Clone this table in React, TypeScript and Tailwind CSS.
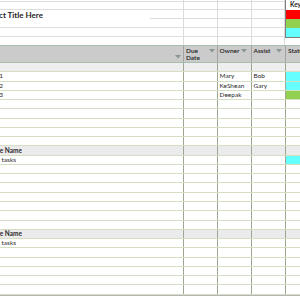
import React from "react";

const font = { fontFamily: "Lato, 'Open Sans', sans-serif" };

function Arrow() {
  return (
    <svg width="6" height="4" viewBox="0 0 6 4" className="shrink-0">
      <path d="M0 0 L6 0 L3 3.5 Z" fill="#8a9696" />
    </svg>
  );
}

function Clip({ w, text, bold }: { w: string; text: string; bold?: boolean }) {
  return (
    <div className={`${w} overflow-hidden flex justify-end shrink-0`}>
      <span className={`whitespace-nowrap ${bold ? "font-bold" : ""}`}>{text}</span>
    </div>
  );
}

type Row = {
  kind: "band" | "task" | "section" | "empty";
  a?: string;
  aw?: string;
  owner?: string;
  assist?: string;
  status?: string;
};

const rows: Row[] = [
  { kind: "band" },
  { kind: "task", a: "Task 1", aw: "w-[3px]", owner: "Mary", assist: "Bob", status: "bg-[#66ffff]" },
  { kind: "task", a: "Task 2", aw: "w-[3px]", owner: "KeShean", assist: "Gary", status: "bg-[#66ffff]" },
  { kind: "task", a: "Task 3", aw: "w-[3px]", owner: "Deepak", status: "bg-[#92d050]" },
  { kind: "empty" },
  { kind: "empty" },
  { kind: "empty" },
  { kind: "empty" },
  { kind: "empty" },
  { kind: "section", a: "Phase Name" },
  { kind: "task", a: "Insert tasks", aw: "w-[16px]", status: "bg-[#66ffff]" },
  { kind: "empty" },
  { kind: "empty" },
  { kind: "empty" },
  { kind: "empty" },
  { kind: "empty" },
  { kind: "empty" },
  { kind: "empty" },
  { kind: "section", a: "Phase Name" },
  { kind: "task", a: "Insert tasks", aw: "w-[16px]" },
  { kind: "empty" },
  { kind: "empty" },
  { kind: "empty" },
  { kind: "empty" },
  { kind: "empty" },
];

function DataRow({ r }: { r: Row }) {
  const bg =
    r.kind === "band" ? "bg-[#eeeeee]" : r.kind === "section" ? "bg-[#ebebeb]" : "bg-white";
  const vline = "border-r border-[#9ea78f]";
  return (
    <div className={`flex h-[9.28px] border-b border-[#d3dfc0] ${bg} text-[6.5px] leading-[8px] text-[#2a2a2a]`}>
      <div className={`w-[184px] shrink-0 ${vline} flex items-center overflow-hidden`}>
        {r.kind === "section" && <Clip w="w-[22px]" text={r.a!} bold />}
        {r.kind === "task" && <Clip w={r.aw!} text={r.a!} />}
      </div>
      <div className={`w-[34px] shrink-0 ${vline}`}></div>
      <div className={`w-[34px] shrink-0 ${vline} flex items-center pl-[1.5px] overflow-hidden whitespace-nowrap`}>
        {r.owner}
      </div>
      <div className={`w-[34px] shrink-0 ${vline} flex items-center pl-[1.5px] overflow-hidden whitespace-nowrap`}>
        {r.assist}
      </div>
      <div className={`flex-1 ${r.status ?? ""}`}></div>
    </div>
  );
}

function TopCol({ w, heights }: { w: string; heights: string[] }) {
  return (
    <div className={`${w} shrink-0 flex flex-col border-r border-[#dcdcdc]`}>
      {heights.map((h, i) => (
        <div key={i} className={`${h} border-b border-[#dedede]`}></div>
      ))}
    </div>
  );
}

export default function App() {
  const std = ["h-[2px]", "h-[8px]", "h-[9px]", "h-[9px]", "h-[8.5px]"];
  return (
    <div className="w-[300px] h-[300px] overflow-hidden bg-white" style={font}>
      {/* top area */}
      <div className="flex h-[44.5px]">
        <div className="w-[150px] shrink-0 flex flex-col">
          <div className="h-[2px] border-b border-[#dedede]"></div>
          <div className="h-[8px] border-b border-[#dedede]"></div>
          <div className="h-[18px] border-b border-[#dedede] flex items-start pt-[1px] text-[8px] leading-[8px] text-[#1e1e1e]">
            <Clip w="w-[43px]" text="Project Title Here" bold />
          </div>
          <div className="h-[8.5px] border-b border-[#dedede]"></div>
        </div>
        <TopCol w="w-[34px]" heights={std} />
        <TopCol w="w-[34px]" heights={std} />
        <TopCol w="w-[34px]" heights={std} />
        <TopCol w="w-[33px]" heights={std} />
        <div className="flex-1 flex flex-col">
          <div className="border-l border-b border-[#7d7d7d] flex flex-col">
            <div className="h-[10px] bg-white flex items-center pl-[4px] text-[6.5px] font-bold text-[#1e1e1e] whitespace-nowrap overflow-hidden">
              Key
            </div>
            <div className="h-[9px] bg-[#ff0000]"></div>
            <div className="h-[9px] bg-[#92d050]"></div>
            <div className="h-[8.5px] bg-[#66ffff]"></div>
          </div>
        </div>
      </div>
      {/* header band */}
      <div className="flex h-[18.5px] bg-[#cbcbcb] border-t border-b border-[#a9bfae] text-[6.5px] leading-[7px] font-semibold text-[#222]">
        <div className="w-[184px] shrink-0 border-r border-[#a3a3a3] flex items-end justify-end pr-[2px] pb-[3px]">
          <Arrow />
        </div>
        <div className="w-[34px] shrink-0 border-r border-[#a3a3a3] flex justify-between pl-[2px] pr-[2px] pt-[1px]">
          <div>
            Due
            <br />
            Date
          </div>
          <div className="pt-[2px]"><Arrow /></div>
        </div>
        <div className="w-[34px] shrink-0 border-r border-[#a3a3a3] flex justify-between pl-[1.5px] pr-[4px] pt-[1px]">
          <div>Owner</div>
          <div className="pt-[2px]"><Arrow /></div>
        </div>
        <div className="w-[34px] shrink-0 border-r border-[#a3a3a3] flex justify-between pl-[1.5px] pr-[3px] pt-[1px]">
          <div>Assist</div>
          <div className="pt-[2px]"><Arrow /></div>
        </div>
        <div className="flex-1 pl-[2px] pt-[1px] whitespace-nowrap overflow-hidden">Status</div>
      </div>
      {/* data rows */}
      {rows.map((r, i) => (
        <DataRow key={i} r={r} />
      ))}
      <div className="border-t border-[#b5b5b5] h-[6px] bg-white"></div>
    </div>
  );
}
